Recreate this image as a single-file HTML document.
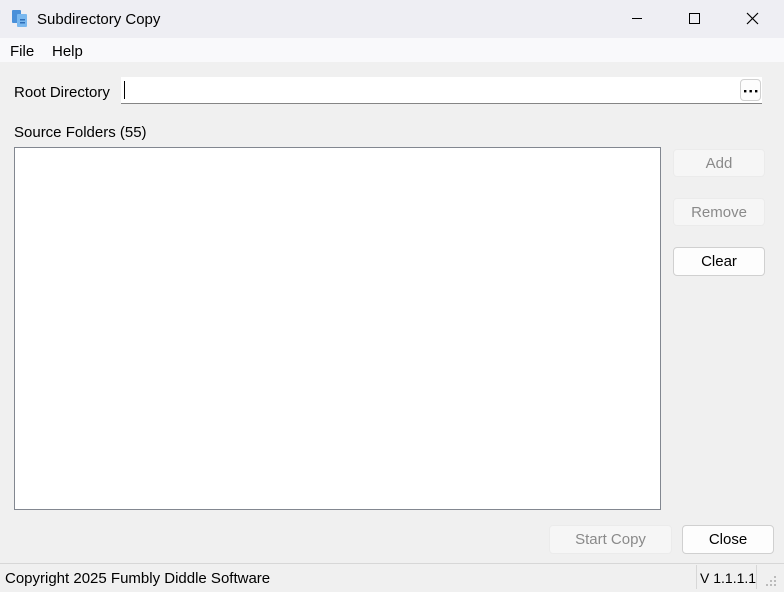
<!DOCTYPE html>
<html><head><style>
*{margin:0;padding:0;box-sizing:border-box}
body{width:784px;height:592px;overflow:hidden;background:#f0f0f0;font-family:"Liberation Sans",sans-serif;font-size:15px;color:#000;position:relative}
.a{position:absolute}
.title{left:0;top:0;width:784px;height:38px;background:#eeeef3}
.menu{left:0;top:38px;width:784px;height:24px;background:#f9f9fb}
.btn{position:absolute;border:1px solid #d0d0d0;border-radius:4px;background:#fdfdfd;text-align:center;font-size:15px}
.dis{background:#f6f6f6;border-color:#ebebeb;color:#8a8a8a}
</style></head><body>
<div class="a title"></div>
<svg class="a" style="left:11px;top:9px" width="18" height="20" viewBox="0 0 18 20"><rect x="1" y="1" width="9" height="13" rx="1" fill="#4a90d9"/><rect x="6" y="5" width="10" height="13" rx="1" fill="#7ab8ef"/><rect x="9" y="10" width="5" height="1.5" fill="#2f6fb8"/><rect x="9" y="13" width="5" height="1.5" fill="#2f6fb8"/></svg>
<div class="a" style="left:37px;top:11px;font-size:15px">Subdirectory Copy</div>
<div class="a" style="left:632px;top:18px;width:10px;height:1px;background:#000"></div>
<div class="a" style="left:689px;top:13px;width:11px;height:11px;border:1.2px solid #000"></div>
<svg class="a" style="left:746px;top:12px" width="13" height="13"><path d="M1 1L12 12M12 1L1 12" stroke="#000" stroke-width="1.2"/></svg>
<div class="a menu"></div>
<div class="a" style="left:10px;top:43px">File</div>
<div class="a" style="left:52px;top:43px">Help</div>
<div class="a" style="left:14px;top:84px">Root Directory</div>
<div class="a" style="left:121px;top:77px;width:641px;height:27px;background:#fff;border-bottom:1px solid #858585"></div>
<div class="a" style="left:124px;top:81px;width:1px;height:18px;background:#000"></div>
<div class="btn" style="left:740px;top:79px;width:21px;height:22px"></div>
<svg class="a" style="left:742px;top:90px" width="18" height="4"><g fill="#000"><rect x="2" y="0" width="2.4" height="2.4"/><rect x="7.5" y="0" width="2.4" height="2.4"/><rect x="13" y="0" width="2.4" height="2.4"/></g></svg>
<div class="a" style="left:14px;top:124px">Source Folders (55)</div>
<div class="a" style="left:14px;top:147px;width:647px;height:363px;background:#fff;border:1px solid #828790"></div>
<div class="btn dis" style="left:673px;top:149px;width:92px;height:28px;line-height:27px">Add</div>
<div class="btn dis" style="left:673px;top:198px;width:92px;height:28px;line-height:27px">Remove</div>
<div class="btn" style="left:673px;top:247px;width:92px;height:29px;line-height:28px">Clear</div>
<div class="btn dis" style="left:549px;top:525px;width:123px;height:29px;line-height:28px">Start Copy</div>
<div class="btn" style="left:682px;top:525px;width:92px;height:29px;line-height:28px">Close</div>
<div class="a" style="left:0;top:563px;width:784px;height:1px;background:#d7d7d7"></div>
<div class="a" style="left:5px;top:570px">Copyright 2025 Fumbly Diddle Software</div>
<div class="a" style="left:696px;top:565px;width:1px;height:24px;background:#d7d7d7"></div>
<div class="a" style="left:756px;top:565px;width:1px;height:24px;background:#d7d7d7"></div>
<div class="a" style="left:700px;top:570px;font-size:14px">V 1.1.1.1</div>
<svg class="a" style="left:766px;top:576px" width="12" height="12"><g fill="#bbb"><rect x="8" y="0" width="2" height="2"/><rect x="4" y="4" width="2" height="2"/><rect x="8" y="4" width="2" height="2"/><rect x="0" y="8" width="2" height="2"/><rect x="4" y="8" width="2" height="2"/><rect x="8" y="8" width="2" height="2"/></g></svg>
</body></html>
